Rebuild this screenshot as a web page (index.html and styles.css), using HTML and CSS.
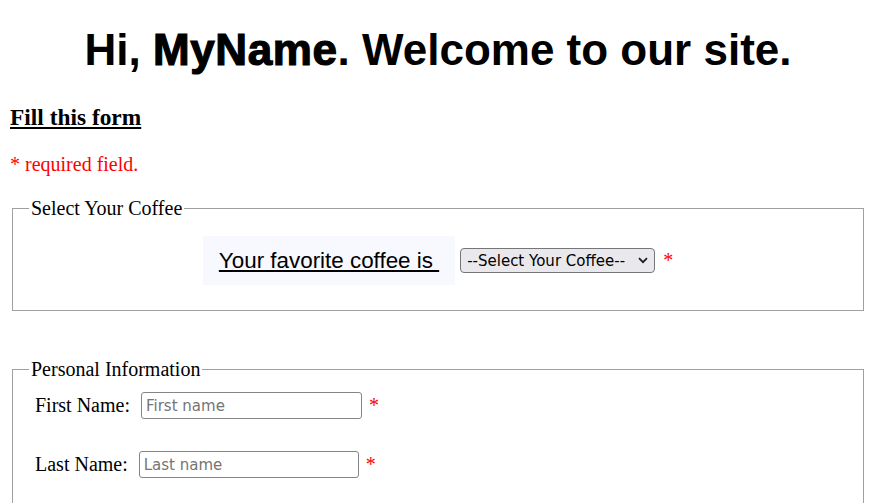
FILE: index.html
```html
<!DOCTYPE html>
<html>
<head>
<meta charset="utf-8">
<link rel="stylesheet" href="styles.css">
</head>
<body>
<h1 class="title">Hi, <span class="name">MyName</span>. Welcome to our site.</h1>
<h3 class="form-title">Fill this form</h3>
<p class="req-note">* required field.</p>
<form class="form">
  <fieldset class="box coffee-box">
    <legend class="legend">Select Your Coffee</legend>
    <div class="coffee-row">
      <div class="coffee-label"><span class="coffee-text">Your favorite coffee is&nbsp;</span></div>
      <div class="select-wrap">
        <select class="select">
          <option>--Select Your Coffee--</option>
        </select>
        <svg class="chev" width="10" height="7" viewBox="0 0 10 7"><path d="M1 1.2 L5 5.2 L9 1.2" fill="none" stroke="#1a1a1a" stroke-width="1.7"/></svg>
      </div>
      <span class="star">*</span>
    </div>
  </fieldset>
  <fieldset class="box personal-box">
    <legend class="legend">Personal Information</legend>
    <div class="field">
      <label class="label">First Name:</label>
      <input class="input input-first" type="text" placeholder="First name">
      <span class="star">*</span>
    </div>
    <div class="field">
      <label class="label">Last Name:</label>
      <input class="input input-last" type="text" placeholder="Last name">
      <span class="star">*</span>
    </div>
  </fieldset>
</form>
</body>
</html>
```
FILE: styles.css
```css
html, body {
  margin: 0;
  padding: 0;
  background: #fff;
}
body {
  padding: 0 12px;
  font-family: "Liberation Serif", "Times New Roman", serif;
  font-size: 20px;
  color: #000;
  overflow: hidden;
}
.title {
  margin: 24px 0 0 0;
  text-align: center;
  font-family: "Liberation Sans", Arial, sans-serif;
  font-weight: bold;
  font-size: 44px;
  line-height: 52px;
}
.name {
  -webkit-text-stroke: 1.2px #000;
  letter-spacing: 0.6px;
}
.form-title {
  margin: 27px 0 0 -2px;
  font-size: 23.4px;
  font-weight: bold;
  text-decoration: underline;
  line-height: 28px;
}
.req-note {
  margin: 21px 0 0 -2px;
  color: #ff0000;
  font-size: 20px;
  line-height: 24px;
}
.form {
  margin-top: 20px;
}
.box {
  margin: 0;
  border: 1px solid #a0a0a0;
  padding: 0 16px;
}
.legend {
  font-size: 20px;
  padding: 0 2px;
  line-height: 24px;
}
.coffee-box {
  padding-top: 16px;
  padding-bottom: 25px;
}
.coffee-row {
  display: flex;
  justify-content: center;
  align-items: center;
}
.coffee-label {
  background: #f8f8ff;
  padding: 11.5px 16px 11.5px 16px;
}
.coffee-text {
  font-family: "Liberation Sans", Arial, sans-serif;
  font-size: 22.4px;
  text-decoration: underline;
  line-height: 26px;
}
.select-wrap {
  position: relative;
  margin-left: 5px;
}
.select {
  appearance: none;
  -webkit-appearance: none;
  box-sizing: border-box;
  width: 195px;
  height: 25px;
  border: 1px solid #767676;
  border-radius: 4px;
  background: #e9e9ed;
  font-family: "DejaVu Sans", Tahoma, sans-serif;
  font-size: 15px;
  padding: 0 22px 0 6px;
  color: #000;
  display: block;
}
.chev {
  position: absolute;
  right: 7px;
  top: 9px;
  pointer-events: none;
}
.star {
  color: #ff0000;
  font-size: 20px;
  margin-left: 7px;
}
.coffee-row .star {
  margin-left: 8px;
}
.personal-box {
  margin-top: 46px;
  padding-top: 11px;
  padding-bottom: 30px;
}
.field {
  display: flex;
  align-items: center;
  padding-left: 6px;
  height: 27px;
}
.field + .field {
  margin-top: 32px;
}
.label {
  font-size: 20px;
  margin-right: 11px;
}
.input {
  box-sizing: border-box;
  height: 27px;
  border: 1px solid #858585;
  border-radius: 3px;
  font-family: "DejaVu Sans", Tahoma, sans-serif;
  font-size: 15px;
  padding: 1px 4px;
}
.input::placeholder {
  color: #757575;
}
.input-first { width: 221px; }
.input-last { width: 220px; }
```
